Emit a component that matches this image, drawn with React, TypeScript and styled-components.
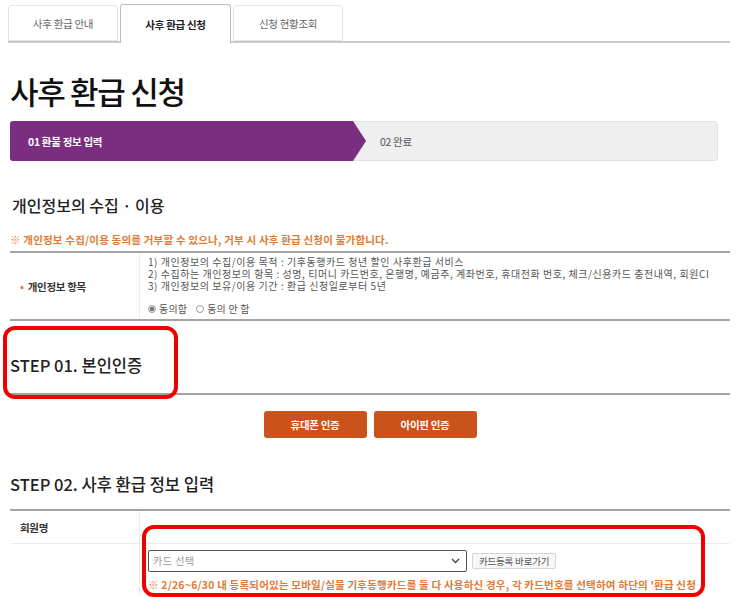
import styled, { createGlobalStyle } from "styled-components"

const GlobalStyle = createGlobalStyle`
  body {
    margin: 0;
    background: #fff;
    color: #222;
    font-family: "Noto Sans CJK KR", "Noto Sans", sans-serif;
  }
`

const Page = styled.div`
  padding: 0 6px 0 10px;
  width: 720px;
  overflow: hidden;
  height: 597px;
`

const TabBar = styled.div`
  display: flex;
  align-items: flex-end;
  height: 43px;
  margin-left: -2px;
  border-bottom: 2px solid #cbcbcb;
  box-sizing: border-box;
`

const Tab = styled.div<{ $active?: boolean }>`
  width: ${(p) => (p.$active ? "111px" : "110px")};
  height: ${(p) => (p.$active ? "39px" : "36px")};
  margin-right: 2px;
  margin-bottom: ${(p) => (p.$active ? "-2px" : "0")};
  display: flex;
  align-items: center;
  justify-content: center;
  box-sizing: border-box;
  border: 1px solid ${(p) => (p.$active ? "#bdbdbd" : "#e4e4e4")};
  border-bottom: ${(p) => (p.$active ? "none" : "1px solid #e4e4e4")};
  border-radius: 3px 3px 0 0;
  background: #fff;
  font-size: 10.5px;
  letter-spacing: -0.3px;
  font-weight: ${(p) => (p.$active ? 700 : 400)};
  color: ${(p) => (p.$active ? "#222" : "#666")};
`

const Title = styled.h1`
  margin: 28px 0 0;
  font-size: 31px;
  line-height: 40px;
  font-weight: 500;
  letter-spacing: -1.3px;
  color: #111;
`

const Steps = styled.div`
  display: flex;
  margin-top: 10px;
  width: 708px;
  height: 40px;
  box-sizing: border-box;
  background: #efefef;
  border: 1px solid #e2e2e2;
  border-radius: 3px;
`

const Step = styled.div<{ $current?: boolean }>`
  display: flex;
  align-items: center;
  box-sizing: border-box;
  font-size: 10.5px;
  letter-spacing: -0.3px;
  ${(p) =>
    p.$current
      ? `
    width: 356px;
    margin: -1px 0 -1px -1px;
    padding-left: 18px;
    background: #7b2e80;
    color: #fff;
    font-weight: 700;
    border-radius: 3px 0 0 3px;
    clip-path: polygon(0 0, calc(100% - 13px) 0, 100% 50%, calc(100% - 13px) 100%, 0 100%);
  `
      : `
    padding-left: 14px;
    color: #555;
  `}
`

const SectionTitle = styled.h2`
  margin: 32px 0 0 2px;
  font-size: 16px;
  line-height: 24px;
  font-weight: 500;
  letter-spacing: 0;
  color: #222;
`

const Notice = styled.p<{ $tight?: boolean }>`
  margin: ${(p) => (p.$tight ? "6px 0 0" : "16px 0 4px")};
  font-size: 10.5px;
  line-height: 14px;
  font-weight: 700;
  letter-spacing: 0.2px;
  color: #e07a34;
  white-space: nowrap;
`

const Table = styled.div`
  border-top: 2px solid #a3a3a3;
  border-bottom: 2px solid #a3a3a3;
`

const Row = styled.div<{ $line?: boolean }>`
  display: grid;
  grid-template-columns: 130px 1fr;
  position: relative;
  border-top: ${(p) => (p.$line ? "1px solid #ececec" : "none")};
`

const Label = styled.div<{ $top?: boolean }>`
  display: flex;
  align-items: ${(p) => (p.$top ? "flex-start" : "center")};
  padding: ${(p) => (p.$top ? "9px 0 0 10px" : "0 0 0 10px")};
  border-right: 1px solid #ececec;
  font-size: 10.5px;
  font-weight: 700;
  letter-spacing: -0.3px;
  color: #333;
`

const Bullet = styled.span`
  color: #e07a34;
  margin-right: 4px;
`

const Cell = styled.div<{ $h?: string }>`
  padding: 3px 0 3px 8px;
  min-height: ${(p) => p.$h || "auto"};
  font-size: 10px;
  line-height: 12px;
  letter-spacing: 0.55px;
  color: #555;
`

const Line = styled.div`
  white-space: nowrap;
`

const Radios = styled.div`
  display: flex;
  gap: 9px;
  margin-top: 10px;
  line-height: 14px;
  letter-spacing: 0.2px;
`

const RadioItem = styled.label`
  display: flex;
  align-items: center;
  gap: 3px;
`

const RadioDot = styled.span<{ $on?: boolean }>`
  width: 8px;
  height: 8px;
  border-radius: 50%;
  border: 1px solid #9a9a9a;
  box-sizing: border-box;
  background: ${(p) => (p.$on ? "radial-gradient(circle, #777 0 2px, #e8e8e8 2.5px)" : "#fff")};
`

const StepHead = styled.div`
  position: relative;
  padding: 33px 0 17px;
  border-bottom: 2px solid #a3a3a3;
`

const StepTitle = styled.h2`
  margin: 0;
  font-size: 16.5px;
  line-height: 22px;
  font-weight: 500;
  letter-spacing: 0;
  color: #222;
`

const Mark = styled.div<{ $w: number; $h: number; $t: number; $l: number }>`
  position: absolute;
  top: ${(p) => p.$t}px;
  left: ${(p) => p.$l}px;
  width: ${(p) => p.$w}px;
  height: ${(p) => p.$h}px;
  box-sizing: border-box;
  border: 4px solid #f20000;
  border-radius: 12px;
  pointer-events: none;
`

const Buttons = styled.div`
  display: flex;
  justify-content: center;
  gap: 7px;
  margin-top: 16px;
`

const AuthButton = styled.button`
  width: 103px;
  height: 27px;
  border: none;
  border-radius: 3px;
  background: #c9531b;
  color: #fff;
  font-family: inherit;
  font-size: 10.5px;
  font-weight: 700;
  letter-spacing: -0.3px;
`

const Step2Title = styled(StepTitle)`
  margin-top: 35px;
  padding-bottom: 14px;
`

const Form = styled.div`
  border-top: 2px solid #a3a3a3;
`

const FieldRow = styled.div`
  display: flex;
  align-items: center;
  gap: 5px;
`

const Select = styled.div`
  width: 319px;
  height: 22px;
  box-sizing: border-box;
  border: 1.5px solid #555;
  border-radius: 2px;
  display: flex;
  align-items: center;
  justify-content: space-between;
  padding: 0 6px 0 4px;
  color: #999;
  font-size: 10px;
`

const SmallButton = styled.button`
  height: 16px;
  padding: 0 6px;
  border: 1px solid #d6d6d6;
  border-radius: 2px;
  background: #f7f7f7;
  color: #555;
  font-family: inherit;
  font-size: 9.5px;
  letter-spacing: -0.2px;
  line-height: 14px;
`

export default function App() {
  return (
    <>
      <GlobalStyle />
      <Page>
        <TabBar>
          <Tab>사후 환급 안내</Tab>
          <Tab $active>사후 환급 신청</Tab>
          <Tab>신청 현황조회</Tab>
        </TabBar>

        <Title>사후 환급 신청</Title>

        <Steps>
          <Step $current>01 환불 정보 입력</Step>
          <Step>02 완료</Step>
        </Steps>

        <SectionTitle>개인정보의 수집 · 이용</SectionTitle>
        <Notice>※ 개인정보 수집/이용 동의를 거부할 수 있으나, 거부 시 사후 환급 신청이 불가합니다.</Notice>
        <Table>
          <Row>
            <Label>
              <Bullet>•</Bullet>개인정보 항목
            </Label>
            <Cell>
              <Line>1) 개인정보의 수집/이용 목적 : 기후동행카드 청년 할인 사후환급 서비스</Line>
              <Line>
                2) 수집하는 개인정보의 항목 : 성명, 티머니 카드번호, 은행명, 예금주, 계좌번호, 휴대전화 번호, 체크/신용카드 충전내역, 회원CI
              </Line>
              <Line>3) 개인정보의 보유/이용 기간 : 환급 신청일로부터 5년</Line>
              <Radios>
                <RadioItem>
                  <RadioDot $on />
                  동의함
                </RadioItem>
                <RadioItem>
                  <RadioDot />
                  동의 안 함
                </RadioItem>
              </Radios>
            </Cell>
          </Row>
        </Table>

        <StepHead>
          <StepTitle>STEP 01. 본인인증</StepTitle>
          <Mark $t={5} $l={-7} $w={175} $h={73} />
        </StepHead>

        <Buttons>
          <AuthButton>휴대폰 인증</AuthButton>
          <AuthButton>아이핀 인증</AuthButton>
        </Buttons>

        <Step2Title>STEP 02. 사후 환급 정보 입력</Step2Title>
        <Form>
          <Row>
            <Label $top>회원명</Label>
            <Cell $h="26px" />
          </Row>
          <Row $line>
            <Label />
            <Cell style={{ paddingTop: 6 }}>
              <FieldRow>
                <Select>
                  <span>카드 선택</span>
                  <svg width="9" height="6" viewBox="0 0 9 6" fill="none">
                    <path d="M1 1l3.5 3.5L8 1" stroke="#444" strokeWidth="1.4" />
                  </svg>
                </Select>
                <SmallButton>카드등록 바로가기</SmallButton>
              </FieldRow>
              <Notice $tight>
                ※ 2/26~6/30 내 등록되어있는 모바일/실물 기후동행카드를 둘 다 사용하신 경우, 각 카드번호를 선택하여 하단의 '환급 신청
              </Notice>
            </Cell>
            <Mark $t={-19} $l={132} $w={563} $h={72} />
          </Row>
        </Form>
      </Page>
    </>
  )
}
